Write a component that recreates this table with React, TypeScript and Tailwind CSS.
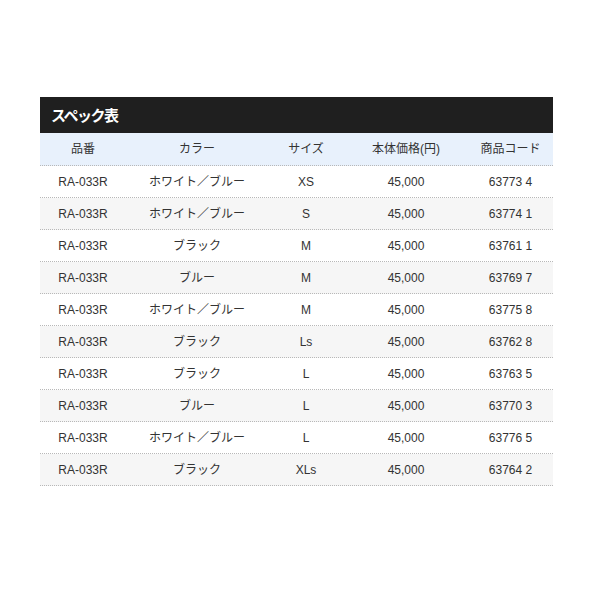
import React from "react";

const rows = [
  ["RA-033R", "ホワイト／ブルー", "XS", "45,000", "63773 4"],
  ["RA-033R", "ホワイト／ブルー", "S", "45,000", "63774 1"],
  ["RA-033R", "ブラック", "M", "45,000", "63761 1"],
  ["RA-033R", "ブルー", "M", "45,000", "63769 7"],
  ["RA-033R", "ホワイト／ブルー", "M", "45,000", "63775 8"],
  ["RA-033R", "ブラック", "Ls", "45,000", "63762 8"],
  ["RA-033R", "ブラック", "L", "45,000", "63763 5"],
  ["RA-033R", "ブルー", "L", "45,000", "63770 3"],
  ["RA-033R", "ホワイト／ブルー", "L", "45,000", "63776 5"],
  ["RA-033R", "ブラック", "XLs", "45,000", "63764 2"],
];

const headers = ["品番", "カラー", "サイズ", "本体価格(円)", "商品コード"];

const cols = "grid grid-cols-[86px_142px_76px_124px_85px]";

export default function App() {
  return (
    <div
      className="w-[600px] h-[600px] bg-white pt-[97px] pl-[40px]"
      style={{ fontFamily: '"Liberation Sans", "Noto Sans CJK JP", sans-serif' }}
    >
      <div className="w-[513px]">
        <div className="h-[36px] bg-[#1f1f1f] flex items-center pl-[11px] pt-[2px]">
          <h2 className="text-white text-[15px] font-bold tracking-[-1.5px]">スペック表</h2>
        </div>
        <div className={`${cols} h-[33px] bg-[#e8f1fc] border-b border-dotted border-[#b8b8b8] text-[12px] text-[#333]`}>
          {headers.map((h) => (
            <div key={h} className="flex items-center justify-center">
              {h}
            </div>
          ))}
        </div>
        {rows.map((r, i) => (
          <div
            key={i}
            className={`${cols} h-[32px] border-b border-dotted border-[#b8b8b8] text-[12px] text-[#333] ${
              i % 2 === 1 ? "bg-[#f6f6f6]" : "bg-white"
            }`}
          >
            {r.map((c, j) => (
              <div key={j} className="flex items-center justify-center">
                {c}
              </div>
            ))}
          </div>
        ))}
      </div>
    </div>
  );
}
